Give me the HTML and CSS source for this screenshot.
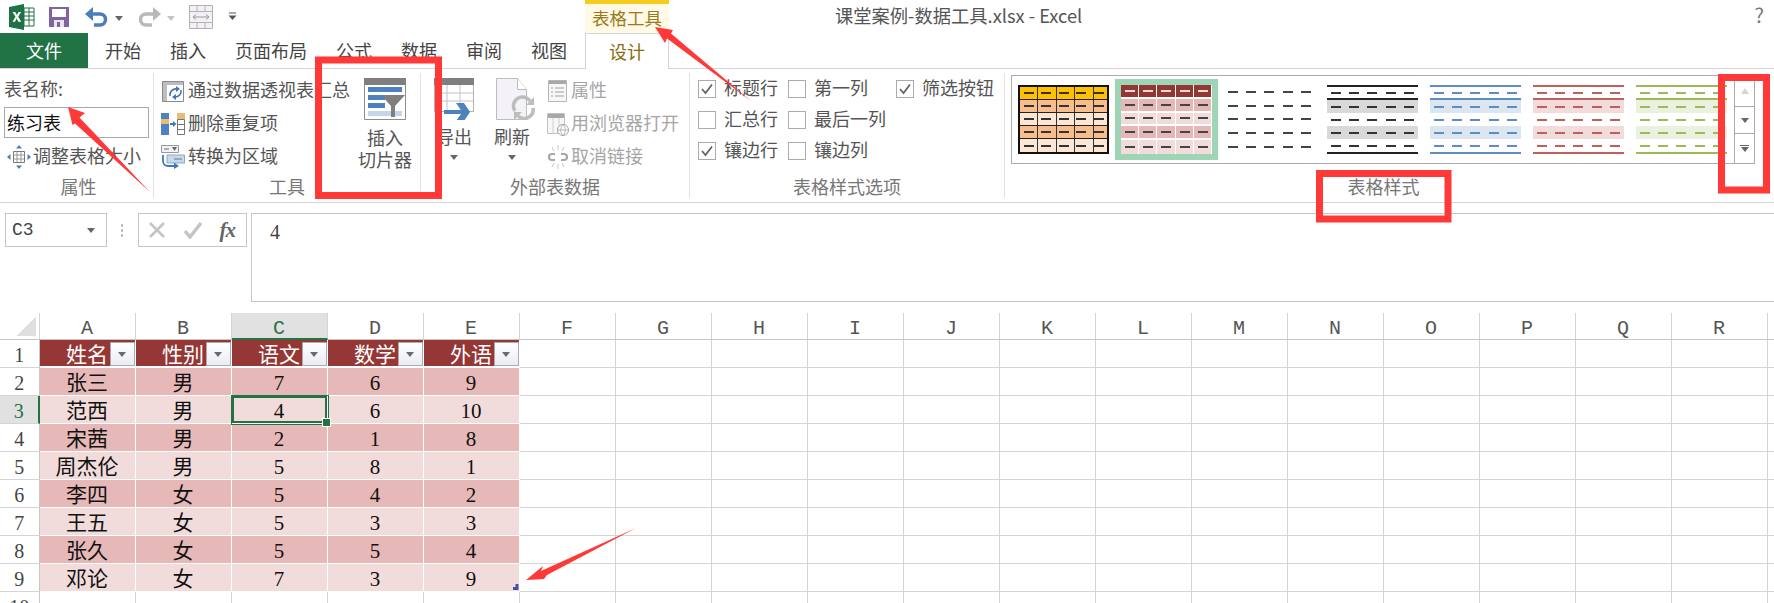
FILE: index.html
```html
<!DOCTYPE html>
<html lang="zh-CN">
<head>
<meta charset="utf-8">
<title>课堂案例-数据工具.xlsx - Excel</title>
<link rel="stylesheet" href="styles.css">
</head>
<body>
<div class="app">
  <header class="titlebar">
    <div class="qat">
      <svg class="i-excel" width="26" height="26" viewBox="0 0 26 26"><path d="M0 3 15 0V26L0 23Z" fill="#1f7246"/><path d="M15 4H25V22H15Z" fill="#fff" stroke="#1f7246"/><path d="M15 8h10M15 12h10M15 16h10M20 4v18" stroke="#1f7246"/><path d="M3.500 8h2.800l1.600 3 1.700-3h2.500l-2.900 4.800 3 5h-2.800l-1.700-3.200-1.700 3.200H3.500l3-5Z" fill="#fff"/></svg>
      <svg class="i-save" width="20" height="20" viewBox="0 0 20 20"><path d="M0 0H20V20H0Z" fill="#8064a2"/><path d="M3 2H17V10H3Z" fill="#fff"/><path d="M5 13H15V20H5Z" fill="#e9e3f1"/><path d="M8 15h3v5H8z" fill="#8064a2"/></svg>
      <svg class="i-undo" width="24" height="22" viewBox="0 0 24 22"><path d="M5 8H15a5.500 5.500 0 0 1 0 11H9" fill="none" stroke="#4a7ebb" stroke-width="3.500"/><path d="M0 8 8 1V15Z" fill="#4a7ebb"/></svg>
      <span class="tri tri-dark q1"></span>
      <svg class="i-redo" width="24" height="22" viewBox="0 0 24 22"><path d="M19 8H9a5.500 5.500 0 0 0 0 11h6" fill="none" stroke="#b9b9b9" stroke-width="3.500"/><path d="M24 8 16 1V15Z" fill="#b9b9b9"/></svg>
      <span class="tri tri-light q2"></span>
      <svg class="i-brick" width="24" height="24" viewBox="0 0 24 24"><path d="M.5.500h23v23H.5z" fill="#f4f1f6" stroke="#b5b0b8"/><path d="M0 6.500h24M0 17.500h24M8 .5v6M16 .5v6M8 17.500v6M16 17.500v6" stroke="#b5b0b8"/><path d="M4 12h16M4 12l3-2.500M4 12l3 2.500M20 12l-3-2.500M20 12l-3 2.500" stroke="#9a9a9a" fill="none"/></svg>
      <svg class="i-more" width="9" height="9" viewBox="0 0 9 9"><path d="M1 1h7" stroke="#555"/><path d="M.5 3.500h8L4.500 8Z" fill="#555"/></svg>
    </div>
    <div class="ctx-head">表格工具</div>
    <div class="doc-title">课堂案例-数据工具.xlsx - Excel</div>
    <div class="help">?</div>
  </header>

  <nav class="tabs">
    <div class="tab-file">文件</div>
    <div class="tab-list">
      <span class="tab">开始</span><span class="tab">插入</span><span class="tab">页面布局</span><span class="tab">公式</span><span class="tab">数据</span><span class="tab">审阅</span><span class="tab">视图</span>
    </div>
    <div class="tab-active">设计</div>
  </nav>

  <section class="ribbon">
    <div class="group g-props">
      <div class="group-body col">
        <div class="tname">表名称:</div>
        <div class="tinput">练习表</div>
        <div class="srow resize">
          <svg width="24" height="24" viewBox="0 0 24 24"><path d="M6.500 6.500h11v11h-11z" fill="#fff" stroke="#777"/><path d="M6.500 10h11M6.500 14h11M10 6.500v11M14 6.500v11" stroke="#999"/><path d="M12 0l3 3.500H9ZM12 24l3-3.500H9ZM0 12l3.500-3v6ZM24 12l-3.500-3v6Z" fill="#4a7ebb"/></svg>
          <span>调整表格大小</span>
        </div>
      </div>
      <div class="group-label">属性</div>
    </div>

    <div class="group g-tools">
      <div class="group-body">
        <div class="small-col tools-col">
          <div class="srow"><svg width="24" height="24" viewBox="0 0 24 24"><path d="M1.500 2.500h21v20h-21z" fill="#fff" stroke="#8a8a8a"/><path d="M2 3h20v3H2ZM2 6h4v16H2Z" fill="#bdbdbd"/><path d="M9 17a6 6 0 0 1 7-7M20 11a6 6 0 0 1-6 7" fill="none" stroke="#3f78b5" stroke-width="1.600"/><path d="M15 7l4 3-4 3ZM15 15v6l-4-3Z" fill="#3f78b5"/></svg><span>通过数据透视表汇总</span></div>
          <div class="srow"><svg width="24" height="24" viewBox="0 0 24 24"><path d="M0 1h8v6H0Z" fill="#4f81bd"/><path d="M0 7h8v5H0Z" fill="#e8bd73"/><path d="M0 12h8v5H0Z" fill="#4f81bd"/><path d="M0 17h8v6H0Z" fill="#4f81bd"/><path d="M16 1h8v6h-8Z" fill="#e8bd73"/><path d="M16.500 7.500h7v15h-7zM16.500 12.500h7M16.500 17.500h7" fill="#fff" stroke="#777"/><path d="M9 12h4" stroke="#3f78b5" stroke-width="2"/><path d="M12 9l3.500 3-3.500 3Z" fill="#3f78b5"/></svg><span>删除重复项</span></div>
          <div class="srow"><svg width="24" height="24" viewBox="0 0 24 24"><path d="M.5.500h17v7H.5z" fill="#f3f3f3" stroke="#999"/><path d="M3 4h5" stroke="#666"/><path d="M11 2h5l-2.500 4Z" fill="#666"/><path d="M6 10h17.500v8H6z" fill="#c6d8ed" stroke="#8aa8c8"/><path d="M13 14h8" stroke="#777"/><path d="M2 10v6a5 5 0 0 0 5 5h8" fill="none" stroke="#3f78b5" stroke-width="1.800"/><path d="M13 17.500 18 21l-5 3Z" fill="#3f78b5"/></svg><span>转换为区域</span></div>
        </div>
        <div class="big slicer">
          <svg width="42" height="42" viewBox="0 0 42 42"><path d="M.5.500h41v41H.5z" fill="#fff" stroke="#8c8c8c"/><path d="M0 0h42v7H0Z" fill="#7f7f7f"/><path d="M4 9h34v5H4ZM4 17h17v5H4ZM4 25h17v5H4Z" fill="#4f81bd"/><path d="M4 33h34v5H4Z" fill="#c5d5ea"/><path d="M17 17H41L31 28V39H27V28Z" fill="#7f7f7f"/></svg>
          <div class="big-text">插入<br>切片器</div>
        </div>
      </div>
      <div class="group-label">工具</div>
    </div>

    <div class="group g-ext">
      <div class="group-body">
        <div class="big exp">
          <svg width="40" height="42" viewBox="0 0 40 42"><path d="M.5.500h39v33H.5z" fill="#fff" stroke="#b0b0b0"/><path d="M0 0h40v7H0Z" fill="#7f7f7f"/><path d="M0 15h40M0 23h40M13 7v27M26 7v27" stroke="#c4c4c4"/><path d="M22 25h8l6 9-6 9h-8l5-7H10v-4h17Z" fill="#4f81bd"/></svg>
          <div class="big-text">导出</div>
          <span class="tri tri-dark"></span>
        </div>
        <div class="big ref">
          <svg width="48" height="42" viewBox="0 0 48 42"><path d="M8.500.500h21l9 11v30h-30z" fill="#f5f1f8" stroke="#bdbdbd"/><path d="M29.500.500v11h9" fill="#fff" stroke="#bdbdbd"/><path d="M27 33a9 9 0 0 1 15-10M45 30a9 9 0 0 1-15 8" fill="none" stroke="#bdbdbd" stroke-width="3.500"/><path d="M38 27h8v-8ZM34 34h-8v8Z" fill="#bdbdbd"/></svg>
          <div class="big-text">刷新</div>
          <span class="tri tri-dark"></span>
        </div>
        <div class="small-col ext-col">
          <div class="srow"><svg width="22" height="24" viewBox="0 0 22 24"><path d="M1.500 1.500h18v21h-18z" fill="#f7f7f7" stroke="#b5b5b5"/><path d="M2 2h17v3H2Z" fill="#a8a8a8"/><path d="M4 9h2M4 13h2M4 17h2M8 9h9M8 13h9M8 17h9" stroke="#a0a0a0"/></svg><span>属性</span></div>
          <div class="srow"><svg width="22" height="24" viewBox="0 0 22 24"><path d="M.5 1.500h17v20H.5z" fill="#f7f7f7" stroke="#c2c2c2"/><path d="M1 2h16v4H1Z" fill="#a8a8a8"/><path d="M6 6v15M12 6v15" stroke="#cfcfcf"/><circle cx="16" cy="18" r="5.500" fill="#fff" stroke="#a5a5a5"/><path d="M10.500 18h11M16 12.500c-3 3-3 8 0 11M16 12.500c3 3 3 8 0 11" fill="none" stroke="#a5a5a5" stroke-width=".8"/></svg><span>用浏览器打开</span></div>
          <div class="srow"><svg width="22" height="24" viewBox="0 0 22 24"><path d="M8 9H5a3 3 0 0 0 0 6h3M14 9h3a3 3 0 0 1 0 6h-3" fill="none" stroke="#a8a8a8" stroke-width="2.200"/><path d="M11 0v5M11 19v5M5 2l2 4M17 2l-2 4M5 22l2-4M17 22l-2-4" stroke="#c8c8c8"/></svg><span>取消链接</span></div>
        </div>
      </div>
      <div class="group-label">外部表数据</div>
    </div>

    <div class="group g-opts">
      <div class="group-body opts">
        <label class="opt"><span class="box on"><svg width="14" height="14" viewBox="0 0 14 14"><path d="M2 7l3.500 4L12 2.500" fill="none" stroke="#666" stroke-width="1.800"/></svg></span>标题行</label>
        <label class="opt"><span class="box"></span>第一列</label>
        <label class="opt"><span class="box on"><svg width="14" height="14" viewBox="0 0 14 14"><path d="M2 7l3.500 4L12 2.500" fill="none" stroke="#666" stroke-width="1.800"/></svg></span>筛选按钮</label>
        <label class="opt"><span class="box"></span>汇总行</label>
        <label class="opt"><span class="box"></span>最后一列</label>
        <span></span>
        <label class="opt"><span class="box on"><svg width="14" height="14" viewBox="0 0 14 14"><path d="M2 7l3.500 4L12 2.500" fill="none" stroke="#666" stroke-width="1.800"/></svg></span>镶边行</label>
        <label class="opt"><span class="box"></span>镶边列</label>
      </div>
      <div class="group-label">表格样式选项</div>
    </div>

    <div class="group g-styles">
      <div class="group-body">
        <div class="gallery">
          <div class="thumb t-orange"><span></span><span></span><span></span><span></span><span></span></div>
          <div class="thumb t-red"><span></span><span></span><span></span><span></span><span></span></div>
          <div class="thumb t-plain"><span></span><span></span><span></span><span></span><span></span></div>
          <div class="thumb t-line t-black"><span></span><span></span><span></span><span></span><span></span></div>
          <div class="thumb t-line t-blue"><span></span><span></span><span></span><span></span><span></span></div>
          <div class="thumb t-line t-rose"><span></span><span></span><span></span><span></span><span></span></div>
          <div class="thumb t-line t-green"><span></span><span></span><span></span><span></span><span></span></div>
          <div class="scroller">
            <div class="sbtn"><span class="tri tri-up"></span></div>
            <div class="sbtn"><span class="tri tri-dark"></span></div>
            <div class="sbtn sbtn-more"><span class="bar"></span><span class="tri tri-dark"></span></div>
          </div>
        </div>
      </div>
      <div class="group-label">表格样式</div>
    </div>
  </section>

  <section class="fbar">
    <div class="namebox"><span>C3</span><span class="tri tri-dark"></span></div>
    <div class="dots"></div>
    <div class="fnbox">
      <svg width="18" height="18" viewBox="0 0 18 18"><path d="M2 2l14 14M16 2 2 16" stroke="#c4c4c4" stroke-width="2.600"/></svg>
      <svg width="20" height="18" viewBox="0 0 20 18"><path d="M2 10l5 6L18 2" fill="none" stroke="#c4c4c4" stroke-width="3.400"/></svg>
      <span class="fx">fx</span>
    </div>
    <div class="finput">4</div>
  </section>

  <section class="sheet">
    <div class="colhead">
      <div class="corner"></div>
      <div>A</div><div>B</div><div class="cur">C</div><div>D</div><div>E</div><div>F</div><div>G</div><div>H</div><div>I</div><div>J</div><div>K</div><div>L</div><div>M</div><div>N</div><div>O</div><div>P</div><div>Q</div><div>R</div>
    </div>
    <div class="row hd"><div class="rh">1</div><div class="c">姓名<i class="fb"></i></div><div class="c">性别<i class="fb"></i></div><div class="c">语文<i class="fb"></i></div><div class="c">数学<i class="fb"></i></div><div class="c">外语<i class="fb"></i></div><div class="fill"></div></div>
    <div class="row b1"><div class="rh">2</div><div class="c">张三</div><div class="c">男</div><div class="c">7</div><div class="c">6</div><div class="c">9</div><div class="fill"></div></div>
    <div class="row b2"><div class="rh cur">3</div><div class="c">范西</div><div class="c">男</div><div class="c sel">4</div><div class="c">6</div><div class="c">10</div><div class="fill"></div></div>
    <div class="row b1"><div class="rh">4</div><div class="c">宋茜</div><div class="c">男</div><div class="c">2</div><div class="c">1</div><div class="c">8</div><div class="fill"></div></div>
    <div class="row b2"><div class="rh">5</div><div class="c">周杰伦</div><div class="c">男</div><div class="c">5</div><div class="c">8</div><div class="c">1</div><div class="fill"></div></div>
    <div class="row b1"><div class="rh">6</div><div class="c">李四</div><div class="c">女</div><div class="c">5</div><div class="c">4</div><div class="c">2</div><div class="fill"></div></div>
    <div class="row b2"><div class="rh">7</div><div class="c">王五</div><div class="c">女</div><div class="c">5</div><div class="c">3</div><div class="c">3</div><div class="fill"></div></div>
    <div class="row b1"><div class="rh">8</div><div class="c">张久</div><div class="c">女</div><div class="c">5</div><div class="c">5</div><div class="c">4</div><div class="fill"></div></div>
    <div class="row b2"><div class="rh">9</div><div class="c">邓论</div><div class="c">女</div><div class="c">7</div><div class="c">3</div><div class="c corner-cell">9</div><div class="fill"></div></div>
    <div class="row"><div class="rh">10</div><div class="c blank"></div><div class="c blank"></div><div class="c blank"></div><div class="c blank"></div><div class="c blank"></div><div class="fill"></div></div>
  </section>

  <svg class="marks" width="1774" height="603" viewBox="0 0 1774 603">
    <g fill="none" stroke="#ff3838" stroke-width="7">
      <rect x="318.500" y="60" width="120" height="135.500"/>
      <rect x="1319.500" y="173.500" width="128.500" height="45.500"/>
      <rect x="1721.500" y="77.500" width="45" height="112.500"/>
    </g>
    <g fill="#ff3838">
      <path d="M68 107 85 113 79.500 117.500 150 192 75 123.500 72.500 125Z"/>
      <path d="M655 27 673 30 671 33.500 751 101 667 38.500 665 43Z"/>
      <path d="M526 580 543 566 541 571 636 528 547 575 544 579Z"/>
    </g>
  </svg>
</div>
</body>
</html>
```

FILE: styles.css
```css
* { box-sizing: border-box; }
html, body { margin: 0; padding: 0; }
body { width: 1774px; height: 603px; overflow: hidden; background: #fff; }
.app {
  position: relative;
  width: 1774px;
  height: 603px;
  overflow: hidden;
  font-family: "Noto Sans CJK SC", "Liberation Sans", sans-serif;
  font-size: 18px;
  color: #555;
}

/* triangles */
.tri { display: inline-block; width: 0; height: 0; border-style: solid; border-width: 5px 4.5px 0; border-color: transparent; }
.tri-dark { border-top-color: #666; }
.tri-light { border-top-color: #c4c4c4; }
.tri-up { border-width: 0 4.5px 6px; border-bottom-color: #d4d4d4; }

/* title bar */
.titlebar { display: flex; height: 33px; }
.qat { width: 585px; flex: none; display: flex; align-items: center; padding-left: 9px; }
.i-excel { margin-right: 14px; }
.i-save { margin-right: 16px; }
.q1 { margin: 3px 14px 0 6px; }
.q2 { margin: 3px 14px 0 6px; }
.i-brick { margin-right: 15px; }
.ctx-head {
  width: 84px;
  flex: none;
  background: #fff9e6;
  border-top: 4px solid #f5cd20;
  color: #9a7a1c;
  text-align: center;
  font-size: 17.500px;
  line-height: 27px;
}
.doc-title { margin-left: 166px; font-size: 18.300px; line-height: 31px; color: #555; white-space: nowrap; }
.help { margin-left: auto; margin-right: 10px; font-size: 20px; line-height: 30px; color: #777; }

/* tabs */
.tabs { display: flex; height: 36px; border-bottom: 1px solid #d4d4d4; }
.tab-file { width: 88px; background: #217346; color: #fff; text-align: center; line-height: 35px; }
.tab-list { width: 497px; display: flex; padding-left: 2.500px; }
.tab { padding: 0 14.500px; line-height: 35px; color: #444; }
.tab-active {
  width: 84px;
  height: 36px;
  background: #fff;
  border: 1px solid #d4d4d4;
  border-bottom: 0;
  text-align: center;
  line-height: 34px;
  color: #8a6a10;
}

/* ribbon */
.ribbon { display: flex; height: 134px; padding: 4px 0 4px; border-bottom: 1px solid #d4d4d4; }
.group { display: flex; flex-direction: column; height: 125px; border-right: 1px solid #e2e2e2; }
.group-body { height: 105px; display: flex; }
.group-label { flex: 1; padding-top: 1px; text-align: center; font-size: 18px; line-height: 24px; color: #777; }
.col { flex-direction: column; }
.g-props { width: 154px; padding-left: 4px; }
.g-tools { width: 267px; }
.g-ext { width: 269px; }
.g-opts { width: 315px; }
.g-styles { flex: 1; border-right: 0; }
.g-styles .group-label { padding-right: 12px; }

.tname { height: 28px; margin-top: 1px; line-height: 28px; }
.tinput { width: 145px; height: 31px; margin-top: 5px; border: 1px solid #a9a9a9; color: #111; line-height: 28px; padding-left: 2px; }
.srow { display: flex; align-items: center; gap: 3px; height: 33px; white-space: nowrap; }
.srow span { margin-bottom: 4px; }
.resize { margin-top: 2px; gap: 2px; padding-left: 3px; letter-spacing: 0; }
.small-col { display: flex; flex-direction: column; padding-top: 1px; }
.tools-col { width: 196px; padding-left: 7px; }
.big { display: flex; flex-direction: column; align-items: center; padding-top: 5px; }
.big-text { line-height: 22px; margin-top: 6px; text-align: center; white-space: nowrap; }
.big .tri { margin-top: 8px; }
.slicer { width: 73px; }
.exp { width: 40px; margin-left: 13px; }
.ref { width: 48px; margin-left: 14px; }
.ref .big-text, .exp .big-text { margin-top: 5px; }
.ext-col { margin-left: 11px; color: #a6a6a6; }
.ext-col .srow { gap: 2px; }

.opts { display: grid; grid-template-columns: 90px 108px 1fr; grid-auto-rows: 31px; padding-left: 8px; margin-top: -2px; align-content: start; }
.opt { display: flex; align-items: center; gap: 8px; white-space: nowrap; }
.box { width: 18px; height: 18px; margin-top: 4px; border: 1px solid #ababab; background: #fff; display: flex; align-items: center; justify-content: center; }

/* gallery */
.gallery {
  width: 744px;
  height: 89px;
  margin: 2px 0 0 6px;
  border: 1px solid #ababab;
  display: flex;
  align-items: center;
  gap: 12px;
  padding-left: 6px;
}
.thumb { width: 91px; height: 69px; flex: none; display: grid; grid-template-rows: repeat(5, 1fr); --dash: #444; }
.thumb span {
  background-image: repeating-linear-gradient(90deg, transparent 0 4px, var(--dash) 4px 14px, transparent 14px 18.200px);
  background-size: 100% 2px;
  background-position: center;
  background-repeat: no-repeat;
}
.t-orange { border: 2px solid #111; --dash: #333; }
.t-orange span {
  border-bottom: 1px solid #222;
  background-image:
    repeating-linear-gradient(90deg, transparent 0 4px, var(--dash) 4px 14px, transparent 14px 17.400px),
    repeating-linear-gradient(90deg, transparent 0 17.400px, #333 17.400px 18.400px);
  background-size: 100% 2px, 100% 100%;
}
.t-orange span:nth-child(1) { background-color: #ffc000; }
.t-orange span:nth-child(2), .t-orange span:nth-child(4) { background-color: #f7bd8c; }
.t-orange span:nth-child(3), .t-orange span:nth-child(5) { background-color: #fde6d3; border-bottom: 0; }
.t-orange span:nth-child(3) { border-bottom: 1px solid #222; }
.t-red { box-shadow: 0 0 0 6px #9fd5b7; }
.t-red span {
  border-bottom: 2px solid #fff;
  background-image:
    repeating-linear-gradient(90deg, transparent 0 4px, var(--dash) 4px 14px, transparent 14px 18.200px),
    repeating-linear-gradient(90deg, transparent 0 17.200px, #fff 17.200px 18.200px);
  background-size: 100% 2px, 100% 100%;
}
.t-red span:nth-child(1) { background-color: #943634; --dash: #f3dcdc; }
.t-red span:nth-child(2), .t-red span:nth-child(4) { background-color: #e5b8b7; }
.t-red span:nth-child(3), .t-red span:nth-child(5) { background-color: #f2dcdb; }
.t-red span:nth-child(5) { border-bottom: 0; }
.t-line { border-top: 2px solid var(--c); border-bottom: 2px solid var(--c); --dash: var(--c); }
.t-line span:nth-child(1) { border-bottom: 2px solid var(--c); }
.t-line span:nth-child(2), .t-line span:nth-child(4) { background-color: var(--tint); }
.t-black { --c: #222; --tint: #d9d9d9; --dash: #333; }
.t-blue { --c: #5f8dc3; --tint: #dce6f1; }
.t-rose { --c: #bf5f5c; --tint: #f2dcdb; }
.t-green { --c: #9bbb59; --tint: #ebf1de; }
.scroller { width: 21px; height: 87px; border-left: 1px solid #ababab; display: flex; flex-direction: column; margin-left: -5px; }
.sbtn { height: 31px; display: flex; flex-direction: column; gap: 1px; align-items: center; justify-content: center; border-bottom: 1px solid #ababab; }
.sbtn:nth-child(2) { height: 27px; }
.sbtn-more { flex: 1; height: auto; border-bottom: 0; }
.bar { width: 9px; height: 1px; background: #666; }

/* formula bar */
.fbar { display: flex; align-items: flex-start; height: 89px; margin-top: 10px; margin-bottom: 11px; padding-left: 5px; }
.namebox {
  width: 102px;
  height: 34px;
  border: 1px solid #c6c6c6;
  display: flex;
  align-items: center;
  justify-content: space-between;
  padding: 0 11px 0 6px;
  font-family: "Liberation Mono", monospace;
  font-size: 18px;
  color: #444;
}
.dots {
  width: 30px;
  height: 14px;
  margin-top: 10px;
  background-image: radial-gradient(circle, #aaa 1px, transparent 1.300px);
  background-size: 30px 5px;
  background-position: 0 0;
}
.fnbox { width: 109.500px; height: 34px; margin-left: .5px; border: 1px solid #c6c6c6; display: flex; align-items: center; gap: 17px; padding-left: 9px; }
.fx { font-family: "Liberation Serif", serif; font-style: italic; font-weight: 700; font-size: 21px; color: #666; letter-spacing: -1px; line-height: 30px; }
.finput { flex: 1; height: 89px; margin-left: 4px; border: 1px solid #c6c6c6; border-right: 0; padding-left: 18px; font-family: "Liberation Serif", serif; font-size: 20px; color: #444; line-height: 36px; }

/* sheet */
.sheet { display: flex; flex-direction: column; font-family: "Liberation Serif", "Noto Sans CJK SC", serif; font-size: 21px; color: #111; }
.colhead {
  display: grid;
  grid-template-columns: 39.500px repeat(18, 96px);
  grid-template-rows: 27px;
  height: 27px;
  flex: none;
  border-bottom: 1px solid #c6c6c6;
  font-family: "Liberation Mono", monospace;
  font-size: 20px;
  line-height: 31px;
  color: #555;
  text-align: center;
}
.colhead > div { border-right: 1px solid #d4d4d4; height: 26px; }
.colhead .cur { background: #e1e1e1; color: #217346; border-bottom: 2px solid #217346; height: 27px; }
.corner { position: relative; background: linear-gradient(135deg, transparent 0 50%, #dfdfdf 50%) 17px 4px / 19px 19px no-repeat; }
.row { display: grid; grid-template-columns: 39.500px repeat(5, 96px) 1fr; grid-template-rows: 28px; height: 28px; flex: none; }
.rh { height: 28px; border-right: 1px solid #c6c6c6; border-bottom: 1px solid #d4d4d4; text-align: center; line-height: 31px; color: #444; font-size: 20px; background: #fff; }
.rh.cur { background: #e1e1e1; color: #217346; border-right: 2px solid #217346; }
.c { position: relative; height: 28px; text-align: center; line-height: 31px; border-right: 1px solid #fff; border-bottom: 1px solid #fff; white-space: nowrap; }
.blank { border-right: 1px solid #d4d4d4; border-bottom: 1px solid #d4d4d4; }
.fill { background: repeating-linear-gradient(90deg, transparent 0 95px, #d4d4d4 95px 96px); border-bottom: 1px solid #d4d4d4; }
.hd .c { background: #953735; color: #fff; border-bottom: 2px solid #fff; line-height: 30px; }
.b1 .c { background: #e6b8b7; }
.b2 .c { background: #f2dcdb; }
.fb {
  position: absolute;
  right: 0;
  top: 2px;
  width: 25px;
  height: 24px;
  border: 1px solid #a8abb0;
  background: linear-gradient(#fff, #e9ecf2);
}
.fb::after {
  content: "";
  position: absolute;
  left: 7px;
  top: 9px;
  border-style: solid;
  border-width: 5px 4.500px 0;
  border-color: #6a6a6a transparent transparent;
}
.sel { box-shadow: inset 0 0 0 2px #217346; outline: 1px solid #217346; z-index: 2; }
.sel::after {
  content: "";
  position: absolute;
  right: -4px;
  bottom: -4px;
  width: 7px;
  height: 7px;
  background: #217346;
  border: 1px solid #fff;
}
.corner-cell::after {
  content: "";
  position: absolute;
  right: 0;
  bottom: 1px;
  width: 6px;
  height: 6px;
  background: #3f51b5;
  clip-path: polygon(100% 0, 100% 100%, 0 100%, 0 50%, 50% 50%, 50% 0);
}
.marks { position: absolute; left: 0; top: 0; pointer-events: none; z-index: 5; }
```
